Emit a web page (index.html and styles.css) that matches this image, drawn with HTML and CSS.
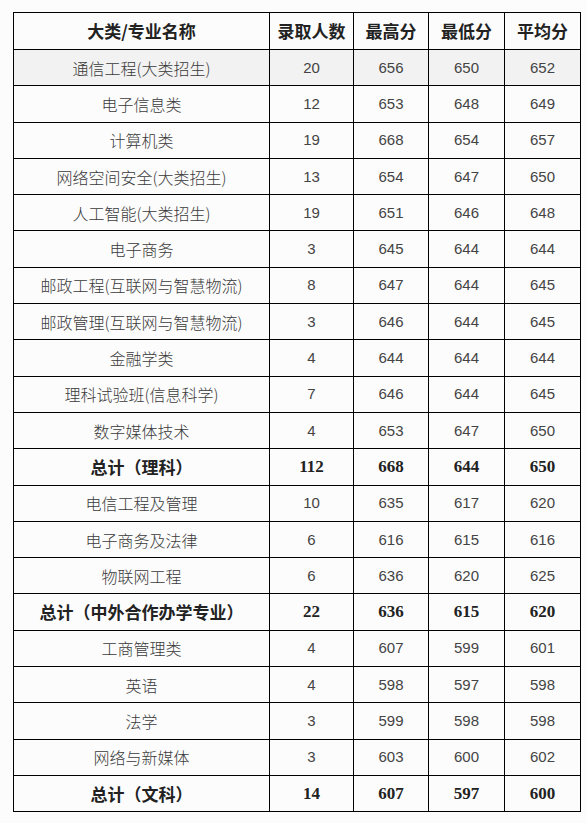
FILE: index.html
```html
<!DOCTYPE html>
<html lang="zh-CN">
<head>
<meta charset="utf-8">
<title>录取分数</title>
<link rel="stylesheet" href="styles.css">
</head>
<body>
<div class="wrap">
<table class="score">
  <colgroup>
    <col class="c-name"><col class="c-num"><col class="c-max"><col class="c-min"><col class="c-avg">
  </colgroup>
  <thead>
    <tr><th>大类/专业名称</th><th>录取人数</th><th>最高分</th><th>最低分</th><th>平均分</th></tr>
  </thead>
  <tbody>
    <tr class="hl"><td class="name">通信工程(大类招生)</td><td>20</td><td>656</td><td>650</td><td>652</td></tr>
    <tr><td class="name">电子信息类</td><td>12</td><td>653</td><td>648</td><td>649</td></tr>
    <tr><td class="name">计算机类</td><td>19</td><td>668</td><td>654</td><td>657</td></tr>
    <tr><td class="name">网络空间安全(大类招生)</td><td>13</td><td>654</td><td>647</td><td>650</td></tr>
    <tr><td class="name">人工智能(大类招生)</td><td>19</td><td>651</td><td>646</td><td>648</td></tr>
    <tr><td class="name">电子商务</td><td>3</td><td>645</td><td>644</td><td>644</td></tr>
    <tr><td class="name">邮政工程(互联网与智慧物流)</td><td>8</td><td>647</td><td>644</td><td>645</td></tr>
    <tr><td class="name">邮政管理(互联网与智慧物流)</td><td>3</td><td>646</td><td>644</td><td>645</td></tr>
    <tr><td class="name">金融学类</td><td>4</td><td>644</td><td>644</td><td>644</td></tr>
    <tr><td class="name">理科试验班(信息科学)</td><td>7</td><td>646</td><td>644</td><td>645</td></tr>
    <tr><td class="name">数字媒体技术</td><td>4</td><td>653</td><td>647</td><td>650</td></tr>
    <tr class="total"><td class="name">总计（理科）</td><td>112</td><td>668</td><td>644</td><td>650</td></tr>
    <tr><td class="name">电信工程及管理</td><td>10</td><td>635</td><td>617</td><td>620</td></tr>
    <tr><td class="name">电子商务及法律</td><td>6</td><td>616</td><td>615</td><td>616</td></tr>
    <tr><td class="name">物联网工程</td><td>6</td><td>636</td><td>620</td><td>625</td></tr>
    <tr class="total"><td class="name">总计（中外合作办学专业）</td><td>22</td><td>636</td><td>615</td><td>620</td></tr>
    <tr><td class="name">工商管理类</td><td>4</td><td>607</td><td>599</td><td>601</td></tr>
    <tr><td class="name">英语</td><td>4</td><td>598</td><td>597</td><td>598</td></tr>
    <tr><td class="name">法学</td><td>3</td><td>599</td><td>598</td><td>598</td></tr>
    <tr><td class="name">网络与新媒体</td><td>3</td><td>603</td><td>600</td><td>602</td></tr>
    <tr class="total"><td class="name">总计（文科）</td><td>14</td><td>607</td><td>597</td><td>600</td></tr>
  </tbody>
</table>
</div>
</body>
</html>
```

FILE: styles.css
```css
html, body {
  margin: 0;
  padding: 0;
  background: #fcfcfc;
}

.wrap {
  padding: 12px 0 0 13px;
}

.score {
  border-collapse: collapse;
  table-layout: fixed;
  width: 567px;
  font-family: "Noto Sans CJK SC", "Noto Sans", sans-serif;
  font-size: 16px;
  color: #333;
}

.c-name { width: 256px; }
.c-num { width: 84px; }
.c-max { width: 75px; }
.c-min { width: 76px; }
.c-avg { width: 76px; }

.score th,
.score td {
  border: 1px solid #000;
  text-align: center;
  vertical-align: middle;
  padding: 0;
  line-height: 20px;
}

.score thead tr {
  height: 37px;
}

.score th {
  font-weight: bold;
  font-size: 17px;
  color: #222;
}

.score tbody tr {
  height: 36.3px;
}

.score td {
  font-family: "Liberation Sans", "Noto Sans", sans-serif;
  font-size: 15px;
  font-weight: 300;
  color: #444;
}

.score td.name {
  font-family: "Noto Sans CJK SC", "Noto Sans", sans-serif;
  font-size: 16px;
  font-weight: 300;
  color: #3a3a3a;
}

.score tr.hl td {
  background: #f2f2f2;
}

.score tr.total td {
  font-family: "Liberation Serif", "Noto Serif", serif;
  font-weight: bold;
  font-size: 17px;
  color: #222;
}

.score tr.total td.name {
  font-family: "Noto Sans CJK SC", sans-serif;
  font-size: 17px;
  font-weight: bold;
}
```
